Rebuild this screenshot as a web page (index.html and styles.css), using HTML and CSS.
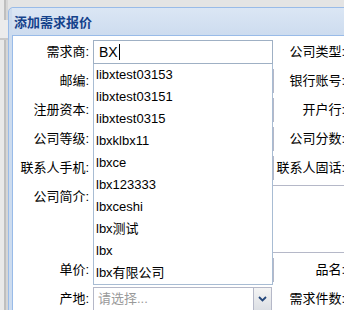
FILE: index.html
```html
<!DOCTYPE html>
<html lang="zh-CN">
<head>
    <meta charset="UTF-8">
    <meta name="viewport" content="width=device-width, initial-scale=1.0">
    <title>添加需求报价</title>
    <link rel="stylesheet" href="styles.css">
</head>
<body>
    <div class="desk">
        <div class="desk-band"></div>
        <div class="win">
            <div class="win-title">添加需求报价</div>
            <div class="win-body">
                <form class="form">
                    <div class="row">
                        <label class="lbl">需求商:</label>
                        <div class="field">
                            <div class="txt txt-focus">BX<span class="caret"></span></div>
                            <ul class="suggest">
                                <li>libxtest03153</li>
                                <li>libxtest03151</li>
                                <li>libxtest0315</li>
                                <li>lbxklbx11</li>
                                <li>lbxce</li>
                                <li>lbx123333</li>
                                <li>lbxceshi</li>
                                <li>lbx测试</li>
                                <li>lbx</li>
                                <li>lbx有限公司</li>
                            </ul>
                        </div>
                        <label class="lbl lbl-r">公司类型:</label>
                    </div>
                    <div class="row">
                        <label class="lbl">邮编:</label>
                        <div class="txt"></div>
                        <label class="lbl lbl-r">银行账号:</label>
                    </div>
                    <div class="row">
                        <label class="lbl">注册资本:</label>
                        <div class="txt"></div>
                        <label class="lbl lbl-r">开户行:</label>
                    </div>
                    <div class="row">
                        <label class="lbl">公司等级:</label>
                        <div class="txt"></div>
                        <label class="lbl lbl-r">公司分数:</label>
                    </div>
                    <div class="row">
                        <label class="lbl">联系人手机:</label>
                        <div class="txt"></div>
                        <label class="lbl lbl-r">联系人固话:</label>
                    </div>
                    <div class="row row-tall">
                        <label class="lbl lbl-top">公司简介:</label>
                        <div class="area"></div>
                    </div>
                    <div class="row">
                        <label class="lbl">单价:</label>
                        <div class="txt"></div>
                        <label class="lbl lbl-r">品名:</label>
                    </div>
                    <div class="row">
                        <label class="lbl">产地:</label>
                        <div class="combo">
                            <div class="combo-input">请选择...</div>
                            <div class="combo-btn">
                                <svg width="9" height="6" viewBox="0 0 9 6"><path d="M1 1 L4.5 4.5 L8 1" fill="none" stroke="#23467a" stroke-width="1.8"/></svg>
                            </div>
                        </div>
                        <label class="lbl lbl-r">需求件数:</label>
                    </div>
                </form>
            </div>
        </div>
    </div>
</body>
</html>
```

FILE: styles.css
```css
* {
box-sizing: border-box;
}

body {
margin: 0;
width: 344px;
height: 310px;
overflow: hidden;
background-color: #e4e4e4;
font-family: "Liberation Sans", "Noto Sans CJK SC", sans-serif;
font-size: 13px;
color: #000;
}

.desk {
position: relative;
padding: 7px 0 0 8px;
height: 310px;
background: linear-gradient(to right, #e9e9e9 0, #e9e9e9 4px, #bfbfbf 4px, #bfbfbf 6px, #d6d6d6 6px, #d6d6d6 8px, transparent 8px);
}

/* strip of the page behind the window */
.desk-band {
position: absolute;
left: 0;
top: 20px;
width: 8px;
height: 20px;
background-color: #ececec;
border-bottom: 2px solid #c9c9c9;
}

.win {
position: relative;
width: 420px;
background-color: #cddcef;
border: 1px solid #99bbe8;
border-radius: 5px 0 0 0;
padding: 0 0 0 3px;
}

.win-title {
height: 27px;
line-height: 29px;
padding-left: 2px;
font-weight: bold;
font-size: 13px;
color: #15428b;
background: linear-gradient(#dbe6f4, #cddcef);
}

.win-body {
background-color: #fff;
border: 1px solid #99bbe8;
height: 290px;
padding-top: 4px;
}

.form {
display: flex;
flex-direction: column;
gap: 5px;
}

.row {
display: grid;
grid-template-columns: 76px 181px 72px 1fr;
column-gap: 4px;
height: 24px;
}

.row-tall {
height: 68px;
}

.lbl {
line-height: 24px;
text-align: right;
white-space: nowrap;
}

.lbl-r {
margin-left: -8px;
margin-right: 5px;
}

.lbl-top {
line-height: 24px;
}

.field {
position: relative;
}

.txt {
height: 24px;
border: 1px solid #b5b8c8;
background-color: #fff;
padding-left: 5px;
line-height: 22px;
font-size: 14px;
}

.txt-focus {
border-color: #9fb0c4;
width: 180px;
}

.caret {
display: inline-block;
width: 1px;
height: 16px;
background-color: #000;
vertical-align: -3px;
margin-left: 1px;
}

.suggest {
position: absolute;
top: 24px;
left: 0;
z-index: 5;
width: 180px;
margin: 0;
padding: 0;
list-style: none;
background-color: #fff;
border: 1px solid #a8bcd3;
border-top: none;
}

.suggest li {
height: 22px;
line-height: 22px;
padding-left: 2px;
font-size: 13px;
}

.area {
grid-column: 2 / 5;
border: 1px solid #b5b8c8;
background-color: #fff;
}

.combo {
display: flex;
width: 179px;
height: 24px;
}

.combo-input {
flex: 1;
border: 1px solid #b5b8c8;
padding-left: 4px;
line-height: 22px;
color: #9a9a9a;
font-size: 13px;
}

.combo-btn {
width: 18px;
border: 1px solid #b5b8c8;
border-left: none;
background: linear-gradient(#f4f4f4, #dcdfe4);
display: flex;
align-items: center;
justify-content: center;
}
```
